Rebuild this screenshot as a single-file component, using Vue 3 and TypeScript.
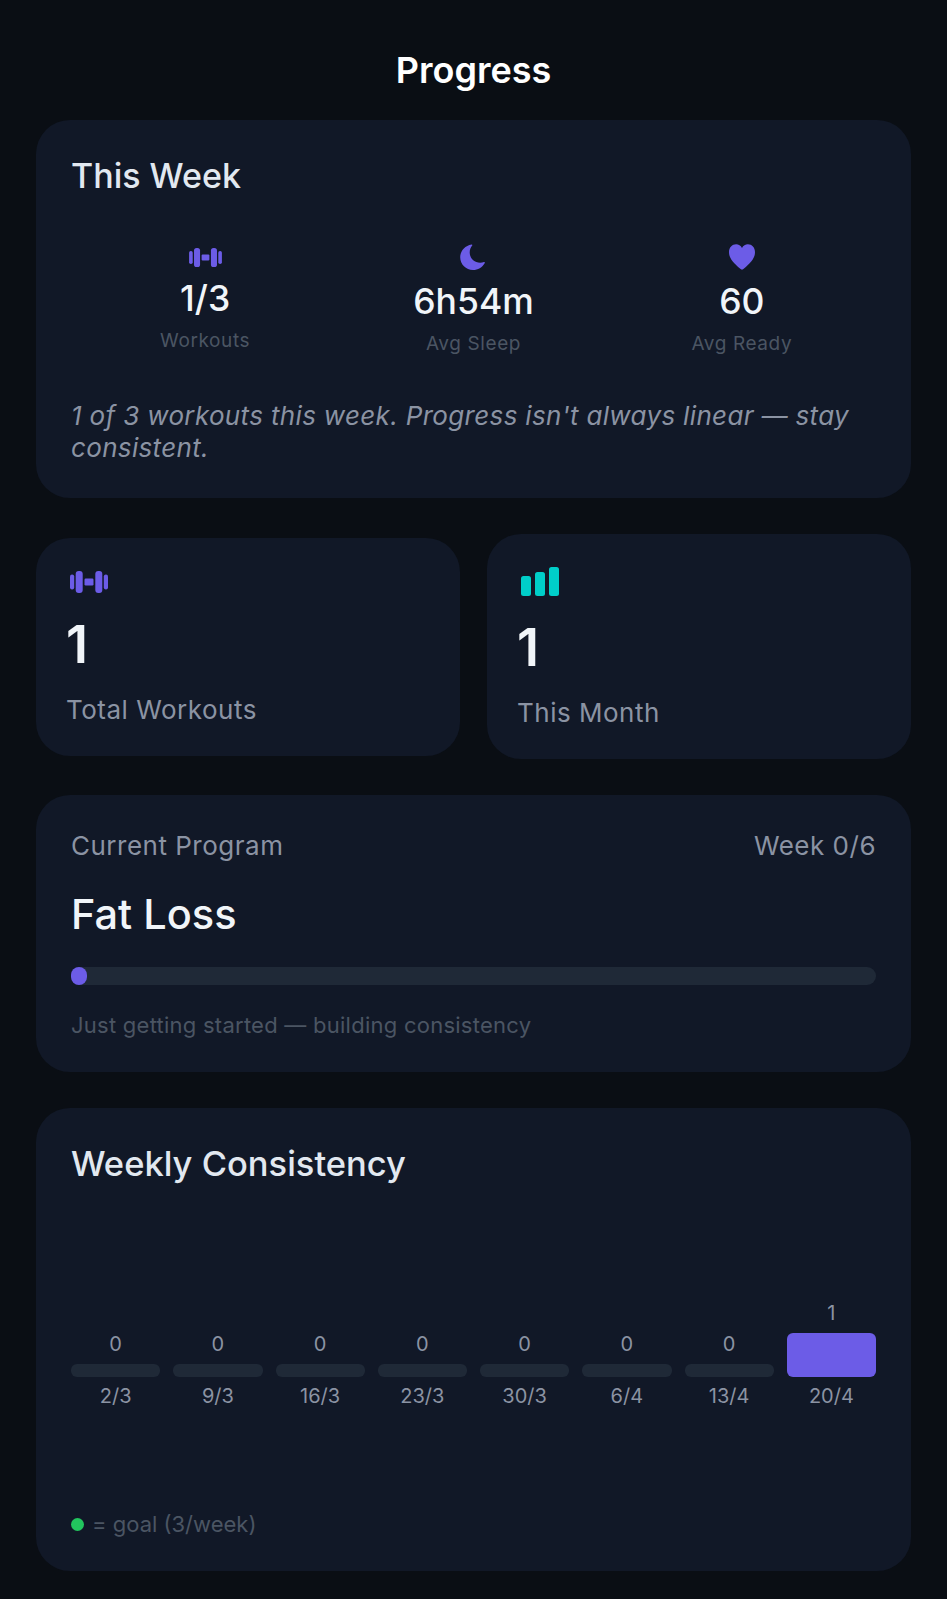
<template>
  <div class="page">
    <h1 class="page-title">Progress</h1>

    <!-- this week -->
    <section class="card week-card">
      <h2 class="card-title">This Week</h2>
      <div class="week-stats">
        <div v-for="stat in weekStats" :key="stat.label" class="week-stat">
          <svg v-if="stat.icon === 'dumbbell'" class="icon-dumbbell-sm" viewBox="0 0 38 22">
            <use href="#dumbbell" />
          </svg>
          <svg v-else-if="stat.icon === 'moon'" class="icon-round" viewBox="0 0 26 26">
            <path d="M11.6 0.4C5 1.4 0.2 6.9 0.2 13.3 0.2 20.4 6 26 13 26c4.900 0 9.300-2.700 11.800-7.100 0.300-0.500-0.200-1.100-0.800-0.900-1.200 0.500-2.500 0.700-3.800 0.700-6 0-10.500-4.500-10.500-10.300 0-2.700 0.900-4.900 2.500-6.900 0.400-0.500 0-1.200-0.600-1.100z" />
          </svg>
          <svg v-else class="icon-round" viewBox="0 0 26 26">
            <path d="M13 25.600C12.500 25.600 12 25.300 11.300 24.700 4.700 19.300 0 14.200 0 8.300 0 3.500 3.200 0.300 7.100 0.300 9.600 0.300 11.700 1.600 13 4 14.300 1.600 16.400 0.300 18.900 0.300 22.800 0.300 26 3.500 26 8.300c0 5.900-4.700 11-11.300 16.400-0.700 0.600-1.200 0.900-1.700 0.900z" />
          </svg>
          <div class="week-value">{{ stat.value }}</div>
          <div class="week-label">{{ stat.label }}</div>
        </div>
      </div>
      <p class="week-note">1 of 3 workouts this week. Progress isn't always linear — stay consistent.</p>
    </section>

    <!-- totals -->
    <div class="totals">
      <section class="card total-card">
        <svg class="icon-dumbbell" viewBox="0 0 38 22">
          <use href="#dumbbell" />
        </svg>
        <div class="total-value">1</div>
        <div class="total-label">Total Workouts</div>
      </section>
      <section class="card total-card">
        <svg class="icon-bars" viewBox="0 0 38 29">
          <rect x="0" y="9" width="10" height="20" rx="2.500" />
          <rect x="14" y="5" width="10" height="24" rx="2.500" />
          <rect x="28" y="0" width="10" height="29" rx="2.500" />
        </svg>
        <div class="total-value">1</div>
        <div class="total-label">This Month</div>
      </section>
    </div>

    <!-- program -->
    <section class="card program-card">
      <div class="program-head">
        <span>Current Program</span>
        <span>Week 0/6</span>
      </div>
      <div class="program-name">Fat Loss</div>
      <div class="program-track">
        <div class="program-fill"></div>
      </div>
      <p class="program-note">Just getting started — building consistency</p>
    </section>

    <!-- weekly chart -->
    <section class="card chart-card">
      <h2 class="chart-title">Weekly Consistency</h2>
      <div class="chart">
        <div v-for="week in weeks" :key="week.label" class="chart-col">
          <span class="chart-count">{{ week.count }}</span>
          <div class="chart-bar" :class="{ active: week.count > 0 }"></div>
          <span class="chart-date">{{ week.label }}</span>
        </div>
      </div>
      <div class="legend">
        <span class="legend-dot"></span>
        <span>= goal (3/week)</span>
      </div>
    </section>

    <svg class="defs" width="0" height="0">
      <defs>
        <g id="dumbbell">
          <rect x="0" y="3.500" width="4.200" height="15" rx="2" />
          <rect x="5.700" y="0" width="7" height="22" rx="3" />
          <rect x="14.500" y="7.500" width="9" height="7" rx="1.200" />
          <rect x="25.300" y="0" width="7" height="22" rx="3" />
          <rect x="33.800" y="3.500" width="4.200" height="15" rx="2" />
        </g>
      </defs>
    </svg>
  </div>
</template>

<script setup lang="ts">
const weekStats = [
  { icon: 'dumbbell', value: '1/3', label: 'Workouts' },
  { icon: 'moon', value: '6h54m', label: 'Avg Sleep' },
  { icon: 'heart', value: '60', label: 'Avg Ready' }
]

const weeks = [
  { label: '2/3', count: 0 },
  { label: '9/3', count: 0 },
  { label: '16/3', count: 0 },
  { label: '23/3', count: 0 },
  { label: '30/3', count: 0 },
  { label: '6/4', count: 0 },
  { label: '13/4', count: 0 },
  { label: '20/4', count: 1 }
]
</script>

<style>
html,
body {
  background: #0a0e14;
}
</style>

<style scoped>
.page {
  box-sizing: border-box;
  width: 947px;
  height: 1599px;
  padding: 0 36px;
  background: #0a0e14;
  font-family: Inter, "Liberation Sans", sans-serif;
  color: #f1f5f9;
  overflow: hidden;
}

.page-title {
  margin: 0;
  padding-top: 48px;
  height: 120px;
  box-sizing: border-box;
  text-align: center;
  font-size: 36px;
  line-height: 44px;
  font-weight: 600;
  color: #fff;
}

.card {
  box-sizing: border-box;
  background: #111827;
  border-radius: 34px;
  padding: 36px 35px;
}

.card-title {
  margin: 0;
  font-size: 34px;
  line-height: 38px;
  font-weight: 500;
  color: #e2e8f0;
}

/* this week */
.week-card {
  height: 378px;
  padding-top: 37px;
}

.week-stats {
  display: flex;
  align-items: center;
  margin-top: 49px;
}

.week-stat {
  flex: 1;
  display: flex;
  flex-direction: column;
  align-items: center;
}

.icon-dumbbell-sm {
  width: 33px;
  height: 19px;
  fill: #6c5ce7;
}

.icon-round {
  width: 26px;
  height: 26px;
  fill: #6c5ce7;
}

.week-value {
  margin-top: 10px;
  font-size: 35.500px;
  line-height: 44px;
  font-weight: 500;
  color: #f1f5f9;
}

.week-label {
  margin-top: 7px;
  font-size: 19px;
  line-height: 26px;
  letter-spacing: 0.6px;
  color: #4b5563;
}

.week-note {
  margin: 43px 0 0;
  font-size: 26px;
  line-height: 32px;
  font-style: italic;
  letter-spacing: 0.34px;
  color: #8b93a3;
}

/* totals */
.totals {
  display: grid;
  grid-template-columns: 1fr 1fr;
  gap: 27px;
  align-items: center;
  margin-top: 36px;
}

.total-card {
  padding: 33px 30px 29px;
}

.icon-dumbbell {
  display: block;
  width: 38px;
  height: 22px;
  margin-left: 4px;
  fill: #6c5ce7;
}

.icon-bars {
  display: block;
  width: 38px;
  height: 29px;
  margin-left: 4px;
  fill: #00cec9;
}

.total-value {
  margin-top: 20px;
  font-size: 52px;
  line-height: 64px;
  font-weight: 600;
  color: #f1f5f9;
}

.total-label {
  margin-top: 16px;
  font-size: 26px;
  line-height: 34px;
  letter-spacing: 0.5px;
  color: #8b93a3;
}

/* program */
.program-card {
  height: 277px;
  margin-top: 36px;
  padding-top: 34px;
}

.program-head {
  display: flex;
  justify-content: space-between;
  font-size: 26px;
  line-height: 34px;
  letter-spacing: 0.5px;
  color: #8b93a3;
}

.program-name {
  margin-top: 25px;
  font-size: 41.500px;
  line-height: 52px;
  font-weight: 500;
  color: #f1f5f9;
}

.program-track {
  height: 18px;
  margin-top: 27px;
  border-radius: 9px;
  background: #1f2937;
}

.program-fill {
  width: 16px;
  height: 18px;
  border-radius: 9px;
  background: #6c5ce7;
}

.program-note {
  margin: 25px 0 0;
  font-size: 22px;
  line-height: 30px;
  letter-spacing: 0.25px;
  color: #4b5563;
}

/* chart */
.chart-card {
  height: 463px;
  margin-top: 36px;
  padding-top: 36px;
}

.chart-title {
  margin: 0;
  font-size: 34.500px;
  line-height: 40px;
  font-weight: 500;
  color: #e2e8f0;
}

.chart {
  display: grid;
  grid-template-columns: repeat(8, 1fr);
  gap: 13px;
  align-items: end;
  margin-top: 115px;
}

.chart-col {
  display: flex;
  flex-direction: column;
  align-items: center;
}

.chart-count {
  font-size: 20px;
  line-height: 28px;
  color: #8b93a3;
}

.chart-bar {
  width: 100%;
  height: 13px;
  margin-top: 6px;
  border-radius: 6px;
  background: #1f2937;
}

.chart-bar.active {
  height: 44px;
  background: #6c5ce7;
}

.chart-date {
  margin-top: 5px;
  font-size: 20px;
  line-height: 28px;
  color: #8b93a3;
}

.legend {
  display: flex;
  align-items: center;
  gap: 8px;
  margin-top: 99px;
  font-size: 22px;
  line-height: 30px;
  color: #4b5563;
}

.legend-dot {
  width: 13px;
  height: 13px;
  border-radius: 50%;
  background: #22c55e;
}

.defs {
  position: absolute;
}
</style>
